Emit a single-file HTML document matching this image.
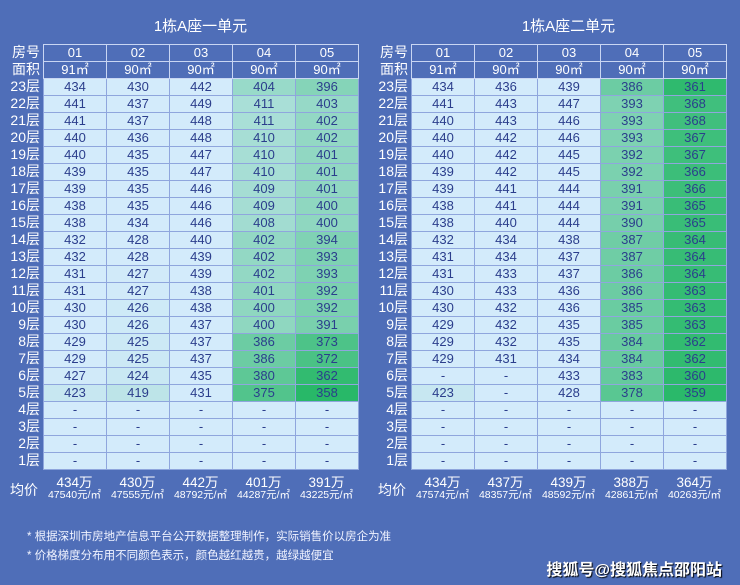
<!DOCTYPE html>
<html><head><meta charset="utf-8"><style>
body{margin:0;width:740px;height:585px;background:#4f6eb8;font-family:"Liberation Sans","Noto Sans CJK SC",sans-serif;position:relative;overflow:hidden;color:#fff}
.t{position:absolute;top:15px;font-size:15px;width:315px;text-align:center}
table{position:absolute;top:44px;border-collapse:collapse;table-layout:fixed}
td{width:62px;height:16px;padding:0;border:1px solid #8fa6dd;text-align:center;font-size:13px;line-height:16px;color:#2b3e8c}
td.h{color:#fff;background:#4f6eb8;border-color:#c9d6f3}
.lab{position:absolute;font-size:14px;color:#fff;line-height:17px;text-align:right;width:40px}
.avg{position:absolute;top:476px;width:63px;text-align:center;color:#fff;line-height:13px}
.avg b{font-weight:normal;font-size:13.5px;display:block}
.avg i{font-style:normal;font-size:10.5px;display:block}
.note{position:absolute;left:27px;font-size:11.5px;color:#f0f3ff}
.wm{position:absolute;right:18px;top:556px;font-size:16px;font-weight:bold;color:#fff;text-shadow:1px 1px 1px #000}
</style></head><body>
<div class="t" style="left:43px">1栋A座一单元</div>
<div class="t" style="left:411px">1栋A座二单元</div>
<div id="root"></div>
<div class="note" style="top:528px">* 根据深圳市房地产信息平台公开数据整理制作，实际销售价以房企为准</div>
<div class="note" style="top:547px">* 价格梯度分布用不同颜色表示，颜色越红越贵，越绿越便宜</div>
<div class="wm">搜狐号@搜狐焦点邵阳站</div>
<script>
var L=[[434,430,442,404,396],[441,437,449,411,403],[441,437,448,411,402],[440,436,448,410,402],[440,435,447,410,401],[439,435,447,410,401],[439,435,446,409,401],[438,435,446,409,400],[438,434,446,408,400],[432,428,440,402,394],[432,428,439,402,393],[431,427,439,402,393],[431,427,438,401,392],[430,426,438,400,392],[430,426,437,400,391],[429,425,437,386,373],[429,425,437,386,372],[427,424,435,380,362],[423,419,431,375,358]];
var R=[[434,436,439,386,361],[441,443,447,393,368],[440,443,446,393,368],[440,442,446,393,367],[440,442,445,392,367],[439,442,445,392,366],[439,441,444,391,366],[438,441,444,391,365],[438,440,444,390,365],[432,434,438,387,364],[431,434,437,387,364],[431,433,437,386,364],[430,433,436,386,363],[430,432,436,385,363],[429,432,435,385,363],[429,432,435,384,362],[429,431,434,384,362],['-','-',433,383,360],[423,'-',428,378,359]];
var avgL=[["434万","47540元/㎡"],["430万","47555元/㎡"],["442万","48792元/㎡"],["401万","44287元/㎡"],["391万","43225元/㎡"]];
var avgR=[["434万","47574元/㎡"],["437万","48357元/㎡"],["439万","48592元/㎡"],["388万","42861元/㎡"],["364万","40263元/㎡"]];
function col(v){if(v==='-')return '#d3ebfb';var t=(428-v)/70;t=Math.max(0,Math.min(1,t));var a=[211,235,251],b=[40,184,104];return 'rgb('+a.map(function(x,i){return Math.round(x+(b[i]-x)*t)}).join(',')+')';}
function build(x,lx,D,A){
var h='<table style="left:'+x+'px"><tr>';
['01','02','03','04','05'].forEach(function(s){h+='<td class="h">'+s+'</td>'});h+='</tr><tr>';
['91㎡','90㎡','90㎡','90㎡','90㎡'].forEach(function(s){h+='<td class="h">'+s+'</td>'});h+='</tr>';
for(var f=23;f>=1;f--){var r=D[23-f]||['-','-','-','-','-'];h+='<tr>';r.forEach(function(v){h+='<td style="background:'+col(v)+'">'+v+'</td>'});h+='</tr>';}
h+='</table>';
var labs=['房号','面积'];for(var f=23;f>=1;f--)labs.push(f+'层');
labs.forEach(function(s,i){h+='<div class="lab" style="left:'+lx+'px;top:'+(44+i*17)+'px">'+s+'</div>'});
h+='<div class="lab" style="left:'+(lx-2)+'px;top:482px;font-size:14px">均价</div>';
A.forEach(function(a,i){h+='<div class="avg" style="left:'+(x+i*63)+'px"><b>'+a[0]+'</b><i>'+a[1]+'</i></div>'});
return h;}
document.getElementById('root').innerHTML=build(43,0,L,avgL)+build(411,368,R,avgR);
</script>
</body></html>
